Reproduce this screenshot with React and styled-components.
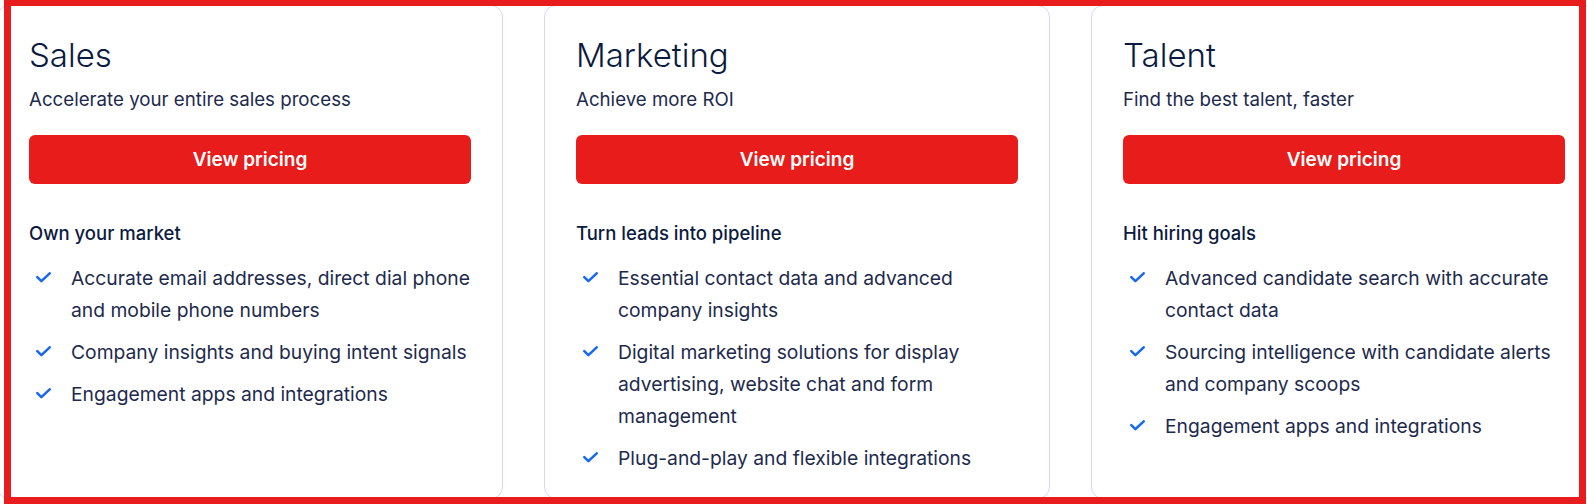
import React from "react";
import styled, { createGlobalStyle } from "styled-components";

const GlobalStyle = createGlobalStyle`
  html, body {
    margin: 0;
    padding: 0;
    background: #ffffff;
    overflow: hidden;
  }
  body {
    font-family: Inter, "Noto Sans", sans-serif;
    color: #0b1b3f;
  }
`;

const Page = styled.div`
  position: relative;
  width: 1587px;
  height: 504px;
  overflow: hidden;
`;

const Frame = styled.div`
  position: absolute;
  top: -1px;
  left: 4px;
  right: 1px;
  bottom: 0;
  border: 7px solid #e81c1c;
  pointer-events: none;
`;

const Row = styled.div`
  display: flex;
  gap: 41px;
  margin-left: -3px;
  padding-top: 5px;
`;

const Card = styled.section`
  flex: 0 0 506px;
  box-sizing: border-box;
  height: 494px;
  padding: 27px 31px 0;
  border: 1px solid #d6d7f2;
  border-radius: 12px;
  background: #fff;
`;

const Title = styled.h2`
  margin: 0;
  font-size: 33px;
  font-weight: 300;
  line-height: 44px;
  color: #0b1b3f;
`;

const Subtitle = styled.p`
  margin: 9px 0 0;
  font-size: 18.7px;
  font-weight: 400;
  line-height: 28px;
  color: #1d2a4d;
`;

const PriceButton = styled.button`
  display: flex;
  align-items: center;
  justify-content: center;
  width: 100%;
  height: 49px;
  margin-top: 21px;
  border: none;
  border-radius: 6px;
  background: #e81c1a;
  color: #fff;
  font-family: inherit;
  font-size: 19px;
  font-weight: 600;
  cursor: pointer;
`;

const ListHeading = styled.h3`
  margin: 37px 0 0;
  font-size: 18.5px;
  font-weight: 500;
  line-height: 24px;
  color: #0b1b3f;
`;

const List = styled.ul`
  list-style: none;
  margin: 17px 0 0;
  padding: 0;
  display: flex;
  flex-direction: column;
  gap: 10px;
`;

const Item = styled.li`
  display: flex;
  align-items: flex-start;
  gap: 20px;
  padding-left: 7px;
  font-size: 19.3px;
  line-height: 32px;
  color: #1d2a4d;
`;

const Check = styled.svg`
  flex: 0 0 15px;
  width: 15px;
  height: 11px;
  margin-top: 10px;
`;

const CheckIcon = () => (
  <Check viewBox="0 0 15 11" fill="none">
    <path
      d="M1.3 5.1 5.4 9.2 13.7 1.3"
      stroke="#1668f0"
      strokeWidth="2.5"
      strokeLinecap="round"
      strokeLinejoin="round"
    />
  </Check>
);

const plans = [
  {
    title: "Sales",
    subtitle: "Accelerate your entire sales process",
    heading: "Own your market",
    items: [
      "Accurate email addresses, direct dial phone and mobile phone numbers",
      "Company insights and buying intent signals",
      "Engagement apps and integrations",
    ],
  },
  {
    title: "Marketing",
    subtitle: "Achieve more ROI",
    heading: "Turn leads into pipeline",
    items: [
      "Essential contact data and advanced company insights",
      "Digital marketing solutions for display advertising, website chat and form management",
      "Plug-and-play and flexible integrations",
    ],
  },
  {
    title: "Talent",
    subtitle: "Find the best talent, faster",
    heading: "Hit hiring goals",
    items: [
      "Advanced candidate search with accurate contact data",
      "Sourcing intelligence with candidate alerts and company scoops",
      "Engagement apps and integrations",
    ],
  },
];

const App = () => {
  return (
    <Page>
      <GlobalStyle />
      <Row>
        {plans.map((plan) => (
          <Card key={plan.title}>
            <Title>{plan.title}</Title>
            <Subtitle>{plan.subtitle}</Subtitle>
            <PriceButton>View pricing</PriceButton>
            <ListHeading>{plan.heading}</ListHeading>
            <List>
              {plan.items.map((item) => (
                <Item key={item}>
                  <CheckIcon />
                  <span>{item}</span>
                </Item>
              ))}
            </List>
          </Card>
        ))}
      </Row>
      <Frame />
    </Page>
  );
};

export default App;
